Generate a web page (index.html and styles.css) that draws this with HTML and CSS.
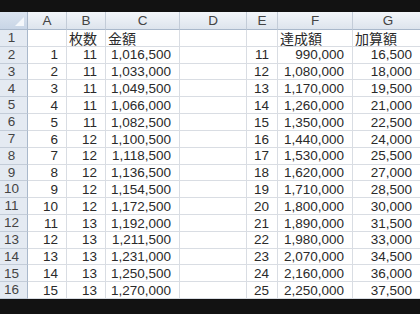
FILE: index.html
```html
<!DOCTYPE html>
<html lang="ja">
<head>
<meta charset="utf-8">
<link rel="stylesheet" href="styles.css">
</head>
<body>
<div class="frame">
  <div class="band band-top"></div>
  <div class="sheet">
    <div class="corner"><span class="tri"></span></div>
    <div class="colhdr">A</div>
    <div class="colhdr">B</div>
    <div class="colhdr">C</div>
    <div class="colhdr">D</div>
    <div class="colhdr">E</div>
    <div class="colhdr">F</div>
    <div class="colhdr last">G</div>

    <div class="rowhdr">1</div><div class="c"></div><div class="c t">枚数</div><div class="c t">金額</div><div class="c"></div><div class="c"></div><div class="c t">達成額</div><div class="c t last">加算額</div>
    <div class="rowhdr">2</div><div class="c">1</div><div class="c">11</div><div class="c">1,016,500</div><div class="c"></div><div class="c">11</div><div class="c">990,000</div><div class="c last">16,500</div>
    <div class="rowhdr">3</div><div class="c">2</div><div class="c">11</div><div class="c">1,033,000</div><div class="c"></div><div class="c">12</div><div class="c">1,080,000</div><div class="c last">18,000</div>
    <div class="rowhdr">4</div><div class="c">3</div><div class="c">11</div><div class="c">1,049,500</div><div class="c"></div><div class="c">13</div><div class="c">1,170,000</div><div class="c last">19,500</div>
    <div class="rowhdr">5</div><div class="c">4</div><div class="c">11</div><div class="c">1,066,000</div><div class="c"></div><div class="c">14</div><div class="c">1,260,000</div><div class="c last">21,000</div>
    <div class="rowhdr">6</div><div class="c">5</div><div class="c">11</div><div class="c">1,082,500</div><div class="c"></div><div class="c">15</div><div class="c">1,350,000</div><div class="c last">22,500</div>
    <div class="rowhdr">7</div><div class="c">6</div><div class="c">12</div><div class="c">1,100,500</div><div class="c"></div><div class="c">16</div><div class="c">1,440,000</div><div class="c last">24,000</div>
    <div class="rowhdr">8</div><div class="c">7</div><div class="c">12</div><div class="c">1,118,500</div><div class="c"></div><div class="c">17</div><div class="c">1,530,000</div><div class="c last">25,500</div>
    <div class="rowhdr">9</div><div class="c">8</div><div class="c">12</div><div class="c">1,136,500</div><div class="c"></div><div class="c">18</div><div class="c">1,620,000</div><div class="c last">27,000</div>
    <div class="rowhdr">10</div><div class="c">9</div><div class="c">12</div><div class="c">1,154,500</div><div class="c"></div><div class="c">19</div><div class="c">1,710,000</div><div class="c last">28,500</div>
    <div class="rowhdr">11</div><div class="c">10</div><div class="c">12</div><div class="c">1,172,500</div><div class="c"></div><div class="c">20</div><div class="c">1,800,000</div><div class="c last">30,000</div>
    <div class="rowhdr">12</div><div class="c">11</div><div class="c">13</div><div class="c">1,192,000</div><div class="c"></div><div class="c">21</div><div class="c">1,890,000</div><div class="c last">31,500</div>
    <div class="rowhdr">13</div><div class="c">12</div><div class="c">13</div><div class="c">1,211,500</div><div class="c"></div><div class="c">22</div><div class="c">1,980,000</div><div class="c last">33,000</div>
    <div class="rowhdr">14</div><div class="c">13</div><div class="c">13</div><div class="c">1,231,000</div><div class="c"></div><div class="c">23</div><div class="c">2,070,000</div><div class="c last">34,500</div>
    <div class="rowhdr">15</div><div class="c">14</div><div class="c">13</div><div class="c">1,250,500</div><div class="c"></div><div class="c">24</div><div class="c">2,160,000</div><div class="c last">36,000</div>
    <div class="rowhdr">16</div><div class="c">15</div><div class="c">13</div><div class="c">1,270,000</div><div class="c"></div><div class="c">25</div><div class="c">2,250,000</div><div class="c last">37,500</div>
  </div>
  <div class="band band-bottom"></div>
</div>
</body>
</html>
```

FILE: styles.css
```css
* { box-sizing: border-box; }
html, body {
  margin: 0;
  padding: 0;
  background: #111;
  overflow: hidden;
}
.frame {
  width: 420px;
  height: 314px;
  display: flex;
  flex-direction: column;
  overflow: hidden;
  font-family: "Liberation Sans", "Noto Sans CJK JP", sans-serif;
  font-size: 13.5px;
  color: #2a2a2a;
}
.band { background: #121212; flex: none; }
.band-top { height: 12px; }
.band-bottom { height: 15px; }
.sheet {
  flex: none;
  height: 287px;
  width: 420px;
  background: #fff;
  display: grid;
  grid-template-columns: 28px 39px 39px 74px 67px 31px 75px 1fr;
  grid-template-rows: 18px repeat(16, 16.8125px);
}
.corner {
  position: relative;
  background: linear-gradient(#dbe4f0, #c8d5e6);
  border-right: 1px solid #a9b8cb;
  border-bottom: 1px solid #a9b8cb;
}
.tri {
  position: absolute;
  right: 3px;
  bottom: 3px;
  width: 0;
  height: 0;
  border-left: 9px solid transparent;
  border-bottom: 9px solid #f4f7fb;
}
.colhdr {
  background: linear-gradient(#f3f6fa, #dde4ed);
  border-right: 1px solid #c3ccd8;
  border-bottom: 1px solid #a9b8cb;
  display: flex;
  align-items: center;
  justify-content: center;
  color: #444;
  font-size: 13.5px;
  line-height: 1;
}
.colhdr.last { padding-left: 3px; border-right: 0; }
.rowhdr {
  background: #e4eaf2;
  border-right: 1px solid #a9b8cb;
  border-bottom: 1px solid #c3ccd8;
  display: flex;
  align-items: center;
  justify-content: center;
  padding-right: 4px;
  color: #444;
  line-height: 1;
}
.c {
  border-right: 1px solid #d9dde3;
  border-bottom: 1px solid #d9dde3;
  display: flex;
  align-items: center;
  justify-content: flex-end;
  padding: 1px 8px 0 2px;
  white-space: nowrap;
  line-height: 1;
}
.c.last { border-right: 0; }
.c.t {
  justify-content: flex-start;
  padding-left: 2px;
  font-family: "Noto Sans CJK JP", sans-serif;
  font-size: 14px;
}
```
